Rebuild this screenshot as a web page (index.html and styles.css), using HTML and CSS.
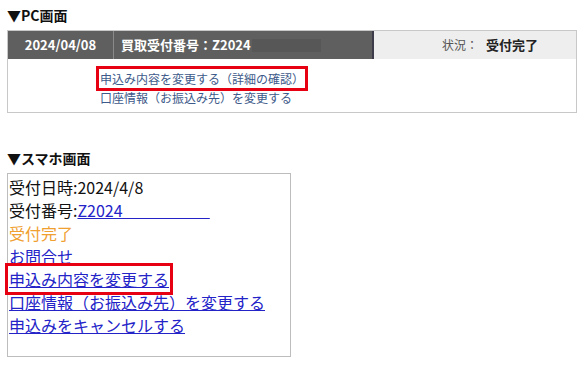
FILE: index.html
```html
<!DOCTYPE html>
<html lang="ja">
<head>
    <meta charset="UTF-8">
    <title>申込み内容の変更</title>
    <link rel="stylesheet" href="styles.css">
</head>
<body>
    <h3 class="section-title">▼PC画面</h3>
    <div class="pc-box">
        <div class="pc-head">
            <div class="pc-date">2024/04/08</div>
            <div class="pc-number">買取受付番号：Z2024<span class="masked"></span></div>
            <div class="pc-status">状況：<strong>受付完了</strong></div>
        </div>
        <div class="pc-body">
            <a href="#" class="pc-link marked">申込み内容を変更する（詳細の確認）</a>
            <a href="#" class="pc-link">口座情報（お振込み先）を変更する</a>
        </div>
    </div>

    <h3 class="section-title sp-title">▼スマホ画面</h3>
    <div class="sp-box">
        <div class="sp-line">受付日時:2024/4/8</div>
        <div class="sp-line">受付番号:<a href="#">Z2024&emsp;&emsp;&emsp;&emsp;&emsp;&nbsp;&nbsp;</a></div>
        <div class="sp-line status">受付完了</div>
        <div class="sp-line"><a href="#">お問合せ</a></div>
        <div class="sp-line"><a href="#" class="marked">申込み内容を変更する</a></div>
        <div class="sp-line"><a href="#">口座情報（お振込み先）を変更する</a></div>
        <div class="sp-line"><a href="#">申込みをキャンセルする</a></div>
    </div>
</body>
</html>
```

FILE: styles.css
```css
body {
    margin: 0;
    padding: 0 7px;
    font-family: "Noto Sans CJK JP", "Noto Sans", sans-serif;
    color: #111;
    background: #fff;
}
.section-title {
    margin: 0;
    padding-top: 6px;
    font-size: 14px;
    line-height: 18px;
    font-weight: bold;
}
.sp-title {
    padding-top: 36px;
}
.pc-box {
    width: 568px;
    margin-top: 6px;
    border: 1px solid #c8c8c8;
}
.pc-head {
    display: flex;
    height: 28px;
    font-size: 13px;
    font-weight: bold;
    line-height: 28px;
}
.pc-date {
    width: 105px;
    background: #5f5f5f;
    color: #fff;
    text-align: center;
    border-right: 1px solid #8a8a8a;
}
.pc-number {
    width: 251px;
    padding-left: 7px;
    background: #5f5f5f;
    color: #fff;
    border-right: 2px solid #3c3c4a;
}
.masked {
    display: inline-block;
    width: 69px;
    height: 13px;
    margin-left: 1px;
    vertical-align: -2px;
    background: #575757;
}
.pc-status {
    flex: 1;
    background: #eeeeee;
    color: #555;
    font-weight: normal;
    font-size: 12px;
    text-align: right;
    padding-right: 38px;
}
.pc-status strong {
    color: #222;
    font-size: 13px;
    margin-left: 8px;
}
.pc-body {
    padding: 10px 0 5px 92px;
}
.pc-link {
    display: block;
    width: max-content;
    font-size: 12px;
    line-height: 19px;
    color: #3d5a8a;
    text-decoration: none;
}
.pc-link.marked {
    outline: 3px solid #e60012;
    outline-offset: 0;
    padding: 0 1px;
    margin-left: -1px;
}
.sp-box {
    width: 281px;
    height: 182px;
    margin-top: 6px;
    border: 1px solid #bdbdbd;
    padding: 0 0 0 1px;
    box-sizing: content-box;
}
.sp-line {
    font-size: 16px;
    line-height: 23px;
}
.sp-line:first-child {
    margin-top: 2px;
}
.sp-line a {
    color: #2323c8;
    text-decoration: underline;
}
.sp-line.status {
    color: #f0a030;
}
.sp-line a.marked {
    outline: 3px solid #e60012;
    outline-offset: 1px;
}
```
